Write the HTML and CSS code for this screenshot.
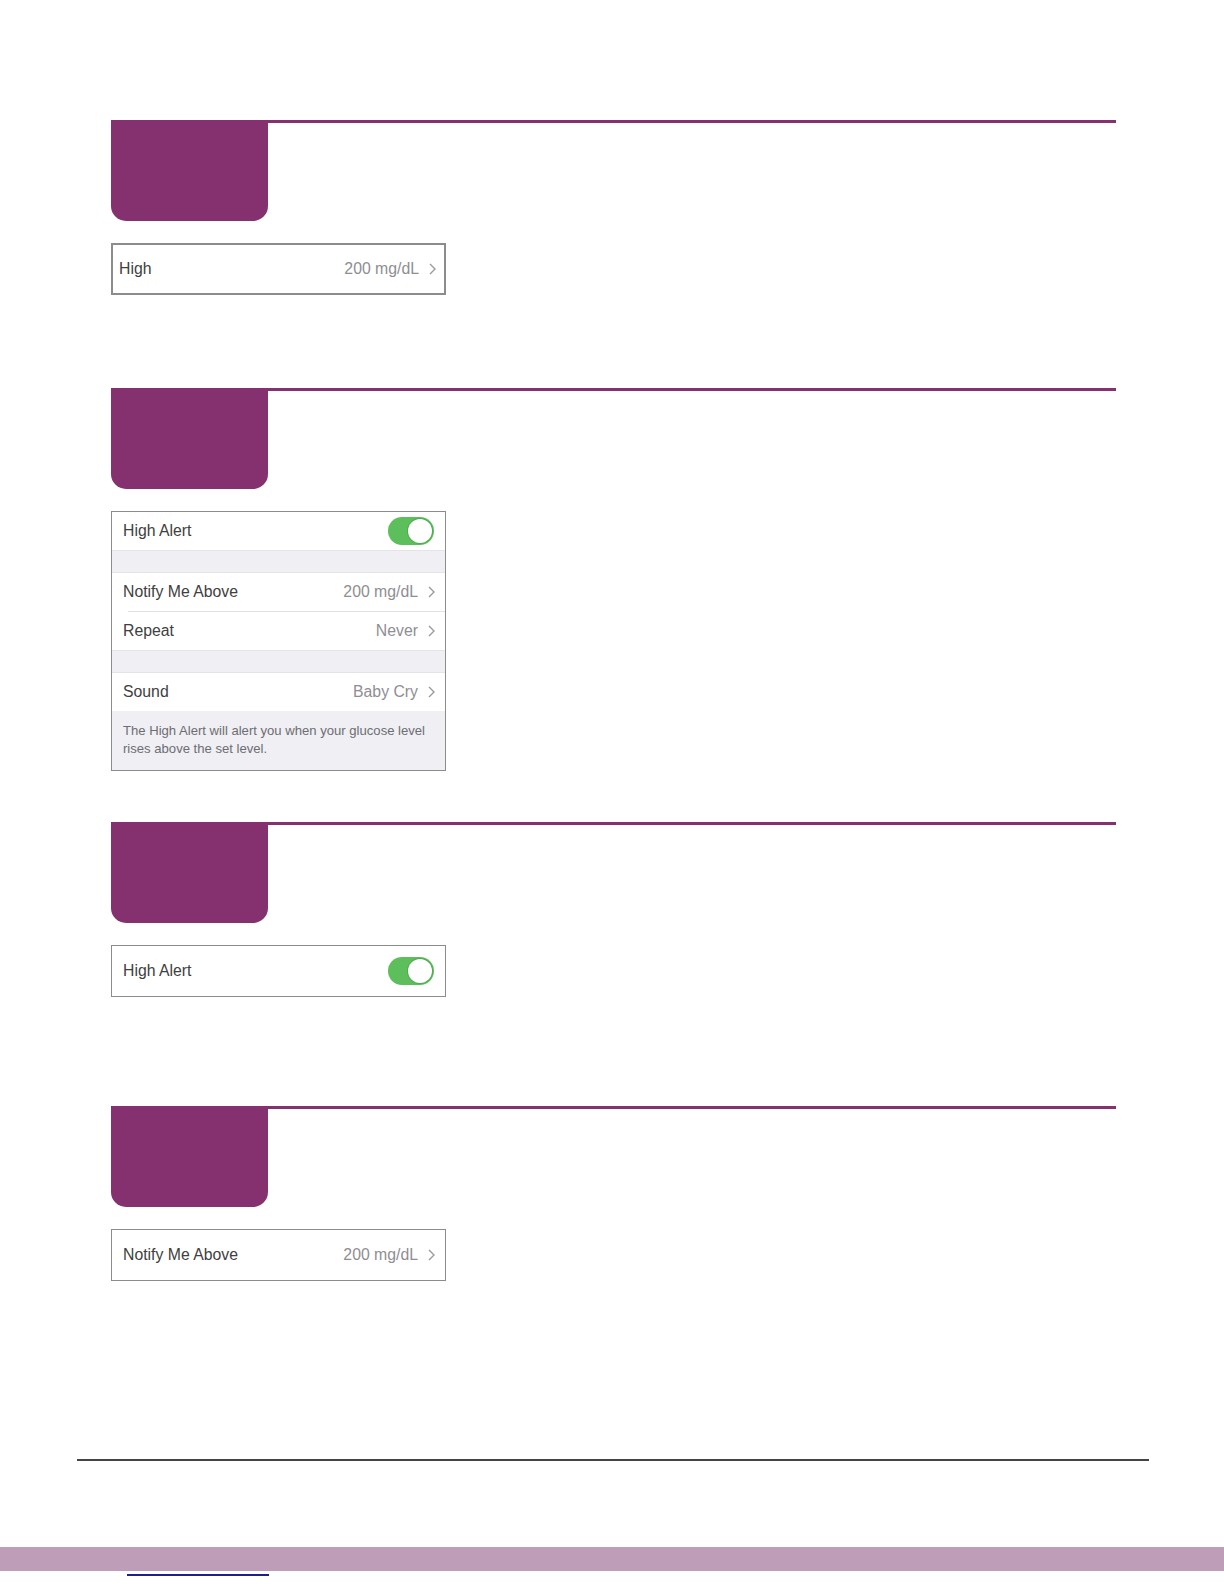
FILE: index.html
```html
<!DOCTYPE html>
<html>

<head>
  <title>High Alert Settings</title>
  <link rel="stylesheet" href="styles.css">
</head>

<body>
  <main class="page">
    <section class="step step-1">
      <div class="step-head">
        <div class="step-tab"></div>
        <div class="step-rule"></div>
      </div>
      <div class="panel panel-strong">
        <div class="row row-single row-tight">
          <span class="row-label">High</span>
          <span class="row-value">200 mg/dL</span>
          <svg class="chevron" width="7" height="12" viewBox="0 0 7 12"><polyline points="1,1 6,6 1,11" /></svg>
        </div>
      </div>
    </section>

    <section class="step step-2">
      <div class="step-head">
        <div class="step-tab"></div>
        <div class="step-rule"></div>
      </div>
      <div class="panel">
        <div class="row">
          <span class="row-label">High Alert</span>
          <span class="toggle"><span class="toggle-knob"></span></span>
        </div>
        <div class="gap"></div>
        <div class="row row-sep">
          <span class="row-label">Notify Me Above</span>
          <span class="row-value">200 mg/dL</span>
          <svg class="chevron" width="7" height="12" viewBox="0 0 7 12"><polyline points="1,1 6,6 1,11" /></svg>
        </div>
        <div class="row">
          <span class="row-label">Repeat</span>
          <span class="row-value">Never</span>
          <svg class="chevron" width="7" height="12" viewBox="0 0 7 12"><polyline points="1,1 6,6 1,11" /></svg>
        </div>
        <div class="gap"></div>
        <div class="row">
          <span class="row-label">Sound</span>
          <span class="row-value">Baby Cry</span>
          <svg class="chevron" width="7" height="12" viewBox="0 0 7 12"><polyline points="1,1 6,6 1,11" /></svg>
        </div>
        <p class="panel-note">The High Alert will alert you when your glucose level rises above the set level.</p>
      </div>
    </section>

    <section class="step step-3">
      <div class="step-head">
        <div class="step-tab"></div>
        <div class="step-rule"></div>
      </div>
      <div class="panel">
        <div class="row row-single">
          <span class="row-label">High Alert</span>
          <span class="toggle"><span class="toggle-knob"></span></span>
        </div>
      </div>
    </section>

    <section class="step step-4">
      <div class="step-head">
        <div class="step-tab"></div>
        <div class="step-rule"></div>
      </div>
      <div class="panel">
        <div class="row row-single">
          <span class="row-label">Notify Me Above</span>
          <span class="row-value">200 mg/dL</span>
          <svg class="chevron" width="7" height="12" viewBox="0 0 7 12"><polyline points="1,1 6,6 1,11" /></svg>
        </div>
      </div>
    </section>
  </main>

  <footer class="page-foot">
    <div class="foot-rule"></div>
    <div class="foot-band"></div>
    <div class="foot-link"></div>
  </footer>
</body>

</html>
```

FILE: styles.css
```css
body {
  margin: 0;
  background: #ffffff;
  font-family: "Liberation Sans", Arial, sans-serif;
  color: #333333;
}

.page {
  padding-top: 120px;
  margin-left: 111px;
  width: 1005px;
}

/* step header: purple tab + rule */
.step-head {
  display: flex;
  height: 101px;
}

.step-tab {
  width: 157px;
  height: 101px;
  background: #85306f;
  border-radius: 0 0 15px 15px;
}

.step-rule {
  flex: 1;
  height: 3px;
  background: #85306f;
}

.step-1 {
  margin-bottom: 93px;
}

.step-2 {
  margin-bottom: 51px;
}

.step-3 {
  margin-bottom: 109px;
}

/* phone screenshot panels */
.panel {
  margin-top: 22px;
  width: 333px;
  border: 1px solid #8c8c8c;
  background: #efeff4;
}

.panel-strong {
  border: 2px solid #8c8c8c;
  width: 331px;
}

.row {
  display: flex;
  align-items: center;
  height: 38px;
  padding: 0 10px 0 11px;
  background: #ffffff;
  font-size: 15.8px;
}

.row-single {
  height: 50px;
}

.row-tight {
  height: 48px;
  padding: 0 8px 0 6px;
}

.row-sep {
  position: relative;
  border-bottom: 1px solid #e2e2e6;
}

.row-sep::after {
  content: "";
  position: absolute;
  left: 0;
  width: 16px;
  bottom: -1px;
  height: 1px;
  background: #ffffff;
}

.row-label {
  flex: 1;
  color: #404040;
}

.row-value {
  color: #8e8e93;
  margin-right: 10px;
}

.chevron {
  fill: none;
  stroke: #9a9aa0;
  stroke-width: 1.4;
}

.gap {
  height: 23px;
  background: #efeff4;
  border-top: 1px solid #e4e4e8;
  border-bottom: 1px solid #e4e4e8;
  box-sizing: border-box;
}

.panel-note {
  margin: 0;
  padding: 11px 11px 12px;
  font-size: 13.1px;
  line-height: 18px;
  color: #6d6d72;
  height: 36px;
}

/* iOS switch */
.toggle {
  display: flex;
  justify-content: flex-end;
  align-items: center;
  width: 46px;
  height: 28px;
  margin-right: 1px;
  border-radius: 14px;
  background: #5cbf5c;
}

.toggle-knob {
  width: 24px;
  height: 24px;
  margin-right: 2px;
  border-radius: 50%;
  background: #ffffff;
  box-shadow: 0 0 0 1px #4faa4f;
}

/* page footer */
.page-foot {
  margin-top: 178px;
}

.foot-rule {
  margin-left: 77px;
  width: 1072px;
  height: 2px;
  background: #444444;
}

.foot-band {
  margin-top: 86px;
  height: 24px;
  background: #be9db8;
}

.foot-link {
  margin: 3px 0 0 127px;
  width: 142px;
  height: 2px;
  background: #1f1f8a;
}
```
